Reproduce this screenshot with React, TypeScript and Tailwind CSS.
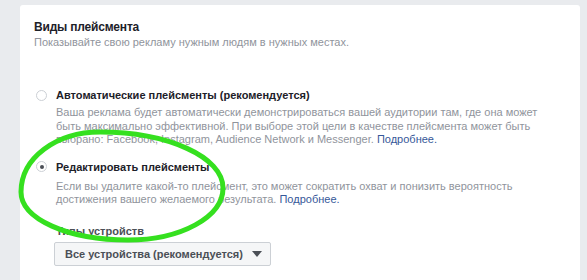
import React from "react";

function Radio({ checked }: { checked?: boolean }) {
  return (
    <span className="flex h-[11px] w-[11px] shrink-0 items-center justify-center rounded-full border border-[#ccd0d5] bg-white">
      {checked ? <span className="h-[4px] w-[4px] rounded-full bg-[#4b4f56]" /> : null}
    </span>
  );
}

export default function App() {
  return (
    <div
      className="relative h-[280px] w-[587px] overflow-hidden bg-[#e9ebee]"
      style={{ fontFamily: '"Liberation Sans", Arial, sans-serif' }}
    >
      <div className="ml-[20px] mt-[5px] h-[300px] w-[560px] rounded-[3px] bg-white pl-[14px] pt-[14px]">
        <div className="text-[12px] font-bold leading-[16px] tracking-[-0.2px] text-[#1d2129]">Виды плейсмента</div>
        <div className="text-[11px] leading-[14px] text-[#90949c]">
          Показывайте свою рекламу нужным людям в нужных местах.
        </div>

        <div className="mt-[38px] flex items-center gap-[9px] pl-[2px]">
          <Radio />
          <span className="text-[11px] font-bold leading-[16px] text-[#1d2129]">
            Автоматические плейсменты (рекомендуется)
          </span>
        </div>
        <div className="ml-[22px] mt-[3px] text-[11px] leading-[13.5px] text-[#90949c]">
          <div className="whitespace-nowrap">Ваша реклама будет автоматически демонстрироваться вашей аудитории там, где она может</div>
          <div className="whitespace-nowrap">быть максимально эффективной. При выборе этой цели в качестве плейсмента может быть</div>
          <div className="whitespace-nowrap">
            выбрано: Facebook, Instagram, Audience Network и Messenger.{" "}
            <span className="text-[#365899]">Подробнее.</span>
          </div>
        </div>

        <div className="mt-[12px] flex items-center gap-[9px] pl-[2px]">
          <Radio checked />
          <span className="text-[11px] font-bold leading-[16px] text-[#1d2129]">Редактировать плейсменты</span>
        </div>
        <div className="ml-[22px] mt-[5px] text-[11px] leading-[13.5px] text-[#90949c]">
          <div className="whitespace-nowrap">Если вы удалите какой-то плейсмент, это может сократить охват и понизить вероятность</div>
          <div className="whitespace-nowrap">
            достижения вашего желаемого результата.{" "}
            <span className="text-[#365899]">Подробнее.</span>
          </div>
        </div>

        <div className="ml-[22px] mt-[16px] text-[11px] font-bold leading-[16px] text-[#4b4f56]">Типы устройств</div>
        <div className="ml-[20px] mt-[3px] flex h-[24px] w-[217px] items-center justify-between rounded-[2px] border border-[#ccd0d5] bg-[#f5f6f7] pl-[10px] pr-[8px]">
          <span className="whitespace-nowrap text-[11px] font-bold leading-[16px] text-[#4b4f56]">Все устройства (рекомендуется)</span>
          <svg width="10" height="6" viewBox="0 0 10 6">
            <path d="M0 0 L10 0 L5 6 Z" fill="#4b4f56" />
          </svg>
        </div>
      </div>

      <svg
        className="pointer-events-none absolute left-0 top-0"
        width="587"
        height="280"
        viewBox="0 0 587 280"
      >
        <path
          d="M100 132 C168 132 223 157 223 188 C223 217 181 240 128 240 C68 240 21 219 21 192 C21 158 56 132 100 132 Z"
          fill="none"
          stroke="#35e01f"
          strokeWidth="5"
        />
      </svg>
    </div>
  );
}
